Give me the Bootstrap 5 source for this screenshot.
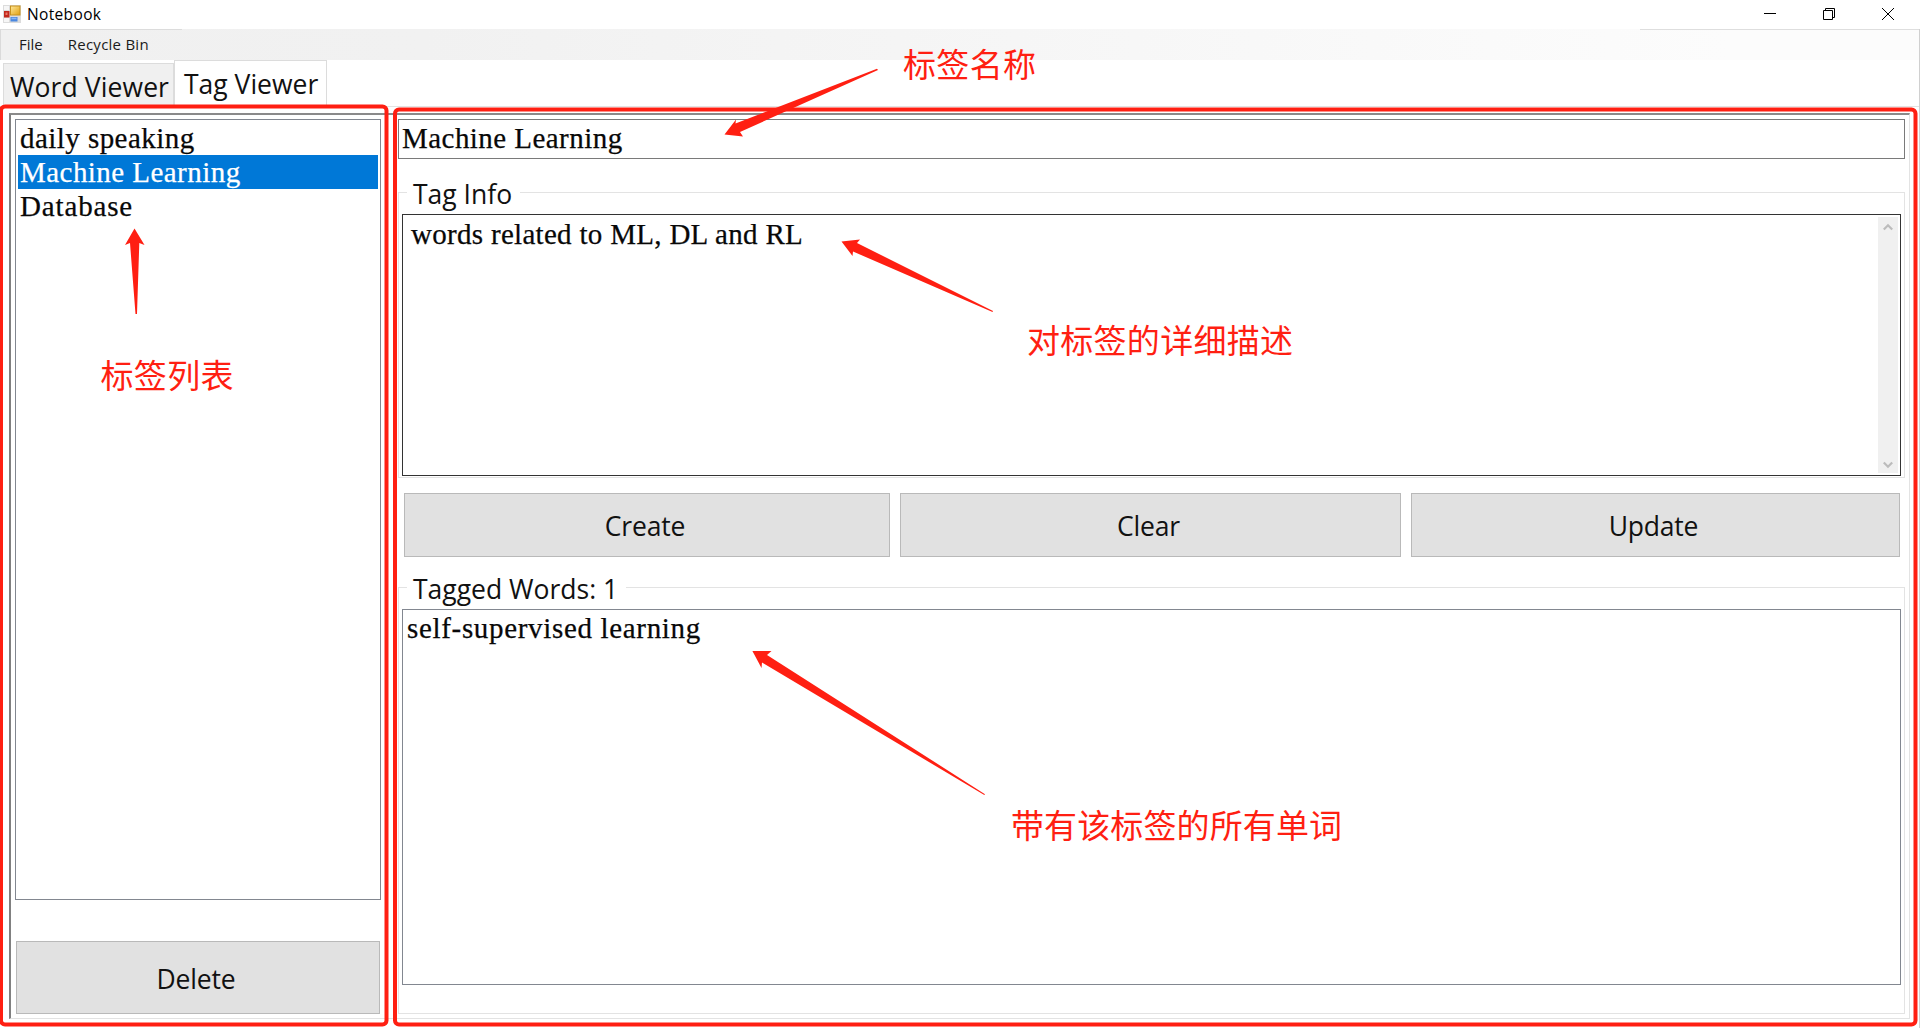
<!DOCTYPE html>
<html lang="en">
<head>
<meta charset="utf-8">
<title>Notebook</title>
<link rel="stylesheet" href="https://cdn.jsdelivr.net/npm/bootstrap@5.3.0/dist/css/bootstrap.min.css">
<style>
body{width:1920px;height:1028px;overflow:hidden;background:#fff;color:#000;font-family:"Open Sans","Noto Sans CJK SC",sans-serif;font-size:26.5px;letter-spacing:0}
.titlebar{height:29px;padding-left:3px;font-size:15.5px;line-height:29px;letter-spacing:.35px}
.titlebar .caption{margin-left:6px;line-height:28px}
.winbtns{gap:47px;padding-right:26px}
.menubar{height:31px;font-size:15px;line-height:31px;letter-spacing:0;color:#1b1b1b;border-left:1px solid #dadada;
 background:linear-gradient(#dcdcdc,#dcdcdc) 0 0/181px 1px no-repeat,linear-gradient(#dedede,#dedede) 100% 0/280px 1px no-repeat,linear-gradient(90deg,#f0f0f0,#f1f1f1 22%,#fcfcfc 90%)}
.menubar a{color:inherit;text-decoration:none;margin-left:18px}
.menubar a + a{margin-left:25px;letter-spacing:.25px}
.tabstrip{height:47px;padding-left:3px;border-bottom:1px solid #e3e3e3}
.tabstrip .tab{border:1px solid #dcdcdc;border-bottom:0;white-space:nowrap;color:#111}
.tabstrip .tab-word{width:171px;height:43px;margin-top:3px;background:#f0f0f0;padding-left:6px;line-height:46px;letter-spacing:.1px}
.tabstrip .tab-tag{width:153px;height:47px;padding-left:9px;line-height:47px;letter-spacing:0}
.page{margin:6px 10px 0 9px;height:906px;border:1px solid #e3e3e3;border-top:2px solid #8a8a8a;border-left:2px solid #808080;padding:4px 4px 4px 4px}
.sidebar{width:366px;margin-right:17px}
.serif{font-family:"Liberation Serif",serif;font-size:29px;letter-spacing:.45px;line-height:34px;color:#080808;-webkit-text-stroke:.25px}
.listpane{border:1px solid #828790;background:#fff}
.tags{height:781px;padding:1px 2px}
.tags div{height:34px;padding-left:2px;line-height:34px;white-space:nowrap}
.tags .picked{background:#0078d7;color:#fff}
.tags .wide{letter-spacing:.85px}
.push{background:#e1e1e1;border:1px solid #b9b9b9;border-radius:0;color:#111;font-size:inherit;font-family:inherit;padding:3px 4px 0 0;letter-spacing:-.2px}
.push-del{height:73px;margin:41px 1px 0;padding-top:4px}
.namebox{height:40px;border:1px solid #7a7a7a;padding-left:3px;line-height:37px}
.group{border:1px solid #e3e3e3;position:relative;padding:21px 3px 0}
.group-title{position:absolute;left:8px;top:-17px;line-height:36px;background:#fff;padding:0 8px 0 6px;white-space:nowrap;color:#111}
.memo{height:262px;border:1px solid #333;padding:2px 2px 2px 8px}
.memo .serif{letter-spacing:.3px}
.vscroll{width:20px;background:#f0f0f0;padding:6px 0 4px}
.btnrow{height:64px;margin:15px 5px 0 6px;gap:10px}
.overlay{position:absolute;left:0;top:0;pointer-events:none}
.overlay text{font-family:"Noto Sans CJK SC",sans-serif;font-size:33px;font-weight:400;letter-spacing:0;fill:#ff1f12}
</style>
<script src="https://cdn.jsdelivr.net/npm/bootstrap@5.3.0/dist/js/bootstrap.bundle.min.js"></script>
</head>
<body class="position-relative">
<header class="titlebar d-flex justify-content-between">
 <div class="d-flex align-items-start">
  <svg width="18" height="18" viewBox="0 0 18 18" style="margin-top:5px">
   <defs><linearGradient id="y" x2="1" y2="1"><stop stop-color="#ffe89a"/><stop offset="1" stop-color="#e0a010"/></linearGradient></defs>
   <rect width="18" height="18" fill="#dcdcdc"/><rect x="1" y="1" width="5" height="4" fill="#f6f6f6"/><rect x="1" y="13" width="5" height="4" fill="#f6f6f6"/>
   <rect x="7.5" y="1" width="9.5" height="9" fill="url(#y)" stroke="#c8921c"/>
   <rect x="1" y="6" width="5.5" height="6.5" fill="#c2281c"/><rect x="2.5" y="7.5" width="2" height="2.5" fill="#e87a6a"/>
   <rect x="7.5" y="12" width="7" height="4.5" fill="#4a88e0"/><rect x="8.5" y="12.7" width="5" height="1.5" fill="#8ab6f5"/>
  </svg>
  <span class="caption">Notebook</span>
 </div>
 <div class="winbtns d-flex align-items-start">
  <svg width="12" height="29" stroke="#000" fill="none"><path d="M0 13.5H12"/></svg>
  <svg width="12" height="29" stroke="#000" fill="none"><path d="M.5 10.5h9v9h-9zM2.5 10V8.5h9v9H10"/></svg>
  <svg width="12" height="29" stroke="#000" fill="none"><path d="M0 8 12 20M12 8 0 20"/></svg>
 </div>
</header>
<nav class="menubar d-flex"><a href="#">File</a><a href="#">Recycle Bin</a></nav>
<div class="tabstrip d-flex">
 <div class="tab tab-word">Word Viewer</div><div class="tab tab-tag">Tag Viewer</div>
</div>
<main class="page d-flex">
 <aside class="sidebar d-flex flex-column">
  <div class="listpane tags serif"><div>daily speaking</div><div class="picked">Machine Learning</div><div class="wide">Database</div></div>
  <button class="btn push push-del">Delete</button>
 </aside>
 <section class="flex-grow-1 d-flex flex-column">
  <div class="namebox serif">Machine Learning</div>
  <div class="group" style="margin-top:33px">
   <div class="group-title">Tag Info</div>
   <div class="memo d-flex justify-content-between">
    <div class="serif">words related to ML, DL and RL</div>
    <div class="vscroll d-flex flex-column justify-content-between align-items-center">
     <svg width="10" height="8" fill="none" stroke="#bcbcbc" stroke-width="2.2"><path d="M.8 6.5 5 2.2 9.2 6.5"/></svg>
     <svg width="10" height="8" fill="none" stroke="#bcbcbc" stroke-width="2.2"><path d="M.8 1.5 5 5.8 9.2 1.5"/></svg>
    </div>
   </div>
   <div style="height:1px"></div>
  </div>
  <div class="btnrow d-flex">
   <button class="btn push" style="width:486px">Create</button>
   <button class="btn push" style="width:501px">Clear</button>
   <button class="btn push flex-grow-1">Update</button>
  </div>
  <div class="group" style="margin-top:30px;height:427px">
   <div class="group-title">Tagged Words: 1</div>
   <div class="listpane serif" style="height:376px;padding:1px 0 0 4px;letter-spacing:.67px">self-supervised learning</div>
  </div>
 </section>
</main>
<svg class="overlay" width="1920" height="1028" viewBox="0 0 1920 1028">
 <path d="M1919.5 29V1028" stroke="#d0d0d0" fill="none"/>
 <g fill="none" stroke="#ff1f12" stroke-width="4">
  <rect x="1" y="106.5" width="385.5" height="918" rx="4"/>
  <rect x="395" y="109.5" width="1520.5" height="915" rx="4"/>
 </g>
 <g fill="#ff1f12">
  <path d="M724.5 134.5 736 119.5 735.5 123.5 877 68.8 878 70 740 132 743 136.5Z"/>
  <path d="M841.5 241.5 860 239.5 857 243 993 311 992.5 312 853 251.5 852.5 256Z"/>
  <path d="M752.4 651 771.5 651 767 655 985 794.2 984.3 795 762 662.5 761.5 668Z"/>
  <path d="M134.5 228.5 144.5 245 139.3 243 137 314 135.5 314 130 243 125 245Z"/>
  <text x="903" y="76.5" textLength="133">标签名称</text>
  <text x="100.5" y="387.5" textLength="133">标签列表</text>
  <text x="1027" y="352.5" textLength="266">对标签的详细描述</text>
  <text x="1011" y="837.5" textLength="331">带有该标签的所有单词</text>
 </g>
</svg>
</body>
</html>
